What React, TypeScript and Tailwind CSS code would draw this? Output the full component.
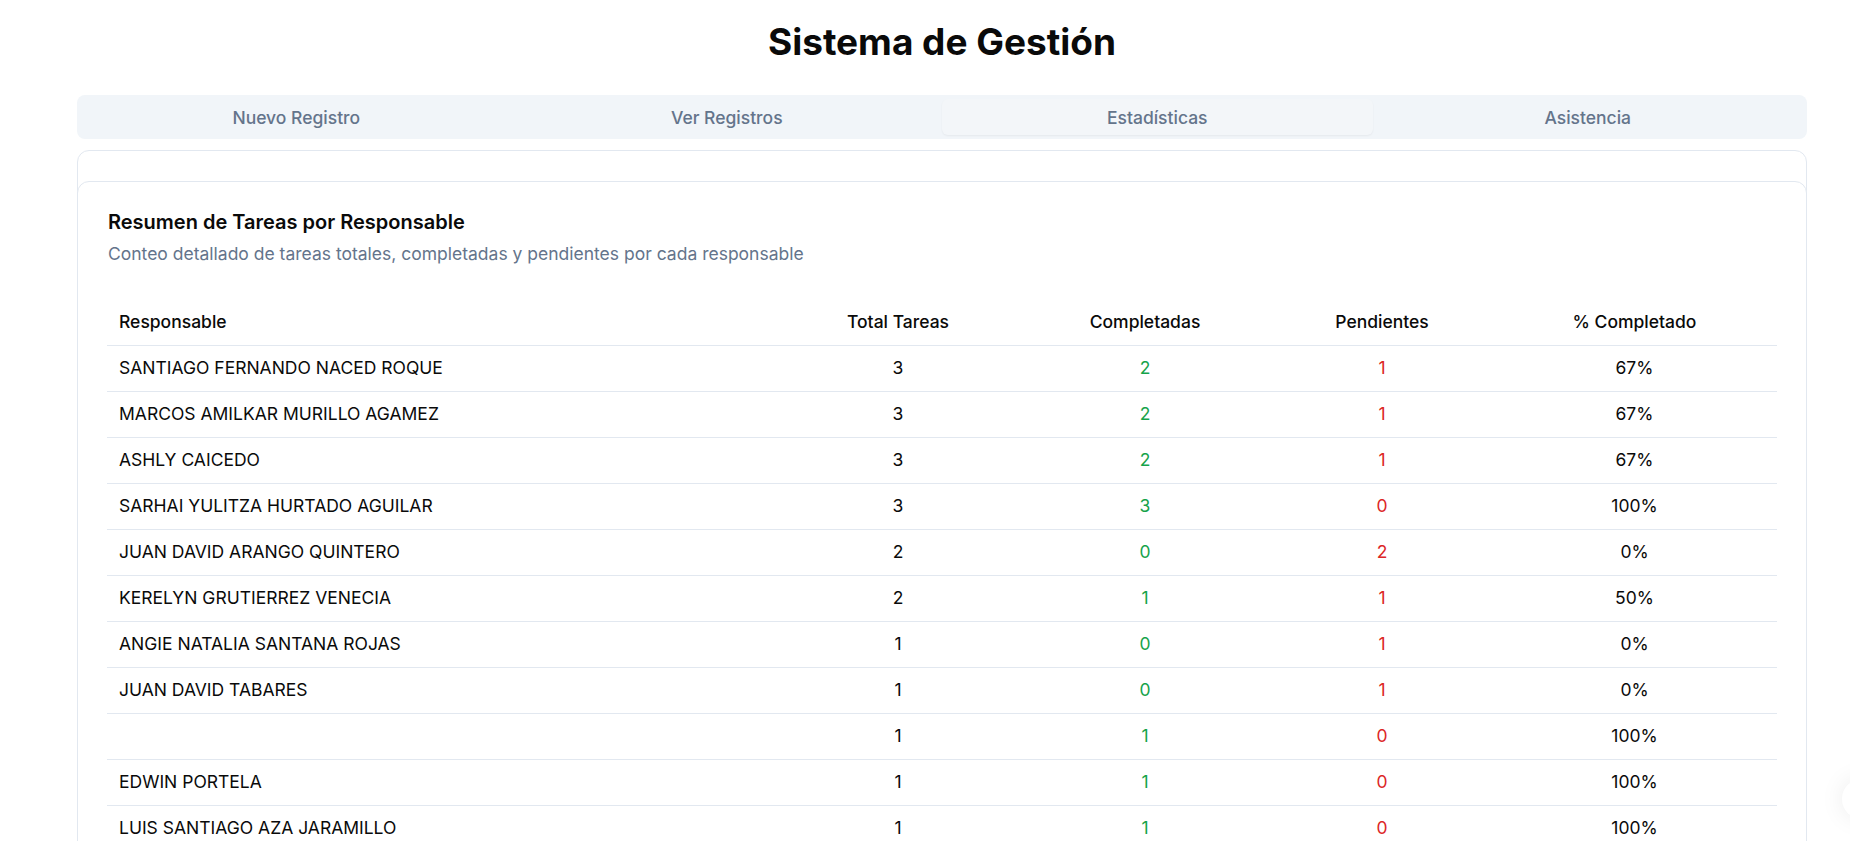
import React from 'react';

type Row = { name: string; total: number; done: number; pending: number; pct: string };

const rows: Row[] = [
  { name: 'SANTIAGO FERNANDO NACED ROQUE', total: 3, done: 2, pending: 1, pct: '67%' },
  { name: 'MARCOS AMILKAR MURILLO AGAMEZ', total: 3, done: 2, pending: 1, pct: '67%' },
  { name: 'ASHLY CAICEDO', total: 3, done: 2, pending: 1, pct: '67%' },
  { name: 'SARHAI YULITZA HURTADO AGUILAR', total: 3, done: 3, pending: 0, pct: '100%' },
  { name: 'JUAN DAVID ARANGO QUINTERO', total: 2, done: 0, pending: 2, pct: '0%' },
  { name: 'KERELYN GRUTIERREZ VENECIA', total: 2, done: 1, pending: 1, pct: '50%' },
  { name: 'ANGIE NATALIA SANTANA ROJAS', total: 1, done: 0, pending: 1, pct: '0%' },
  { name: 'JUAN DAVID TABARES', total: 1, done: 0, pending: 1, pct: '0%' },
  { name: '', total: 1, done: 1, pending: 0, pct: '100%' },
  { name: 'EDWIN PORTELA', total: 1, done: 1, pending: 0, pct: '100%' },
  { name: 'LUIS SANTIAGO AZA JARAMILLO', total: 1, done: 1, pending: 0, pct: '100%' },
];

const tabs = ['Nuevo Registro', 'Ver Registros', 'Estadísticas', 'Asistencia'];

export default function App() {
  return (
    <div className="min-h-screen bg-white text-[#0a0a0a] font-['Inter',sans-serif]">
      <div className="ml-[77px] w-[1730px] pt-[22px]">
        <h1 className="text-center text-[37px] leading-10 font-bold">Sistema de Gestión</h1>

        {/* Tabs */}
        <div className="mt-[33px] grid h-[44px] grid-cols-4 rounded-lg bg-[#f1f5f9] p-1">
          {tabs.map((t) => (
            <div
              key={t}
              className={
                t === 'Estadísticas'
                  ? 'flex items-center justify-center rounded-md bg-[#f3f6f9] pt-0.5 text-[17.5px] font-medium text-[#64748b] shadow-[0_1px_2px_rgba(0,0,0,0.05)]'
                  : 'flex items-center justify-center rounded-md pt-0.5 text-[17.5px] font-medium text-[#64748b]'
              }
            >
              {t}
            </div>
          ))}
        </div>

        {/* Outer card */}
        <div className="mt-[11px] rounded-xl border border-[#e2e8f0] bg-white pt-[30px]">
          <div className="-mx-px rounded-xl border border-[#e2e8f0] bg-white px-[29px] pt-[26px] pb-8">
            <div className="pl-px">
              <h3 className="text-[20px] font-semibold leading-7">Resumen de Tareas por Responsable</h3>
              <p className="mt-1.5 text-[17.5px] leading-6 text-[#64748b]">
                Conteo detallado de tareas totales, completadas y pendientes por cada responsable
              </p>
            </div>

            <table className="mt-[33px] w-full table-fixed border-collapse text-[17.5px]">
              <colgroup>
                <col className="w-[671px]" />
                <col className="w-[240px]" />
                <col className="w-[254px]" />
                <col className="w-[220px]" />
                <col />
              </colgroup>
              <thead>
                <tr className="h-[46px] border-b border-[#e2e8f0]">
                  <th className="px-3 text-left font-medium">Responsable</th>
                  <th className="px-3 text-center font-medium">Total Tareas</th>
                  <th className="px-3 text-center font-medium">Completadas</th>
                  <th className="px-3 text-center font-medium">Pendientes</th>
                  <th className="px-3 text-center font-medium">% Completado</th>
                </tr>
              </thead>
              <tbody>
                {rows.map((r, i) => (
                  <tr key={i} className="h-[46px] border-b border-[#e2e8f0]">
                    <td className="px-3">{r.name}</td>
                    <td className="px-3 text-center">{r.total}</td>
                    <td className="px-3 text-center text-[#16a34a]">{r.done}</td>
                    <td className="px-3 text-center text-[#dc2626]">{r.pending}</td>
                    <td className="px-3 text-center">{r.pct}</td>
                  </tr>
                ))}
              </tbody>
            </table>
          </div>
        </div>
      </div>

      {/* floating button, mostly off-screen */}
      <div className="fixed left-[1842px] top-[779px] h-10 w-10 rounded-full bg-white shadow-[0_0_24px_rgba(0,0,0,0.08)]"></div>
    </div>
  );
}
